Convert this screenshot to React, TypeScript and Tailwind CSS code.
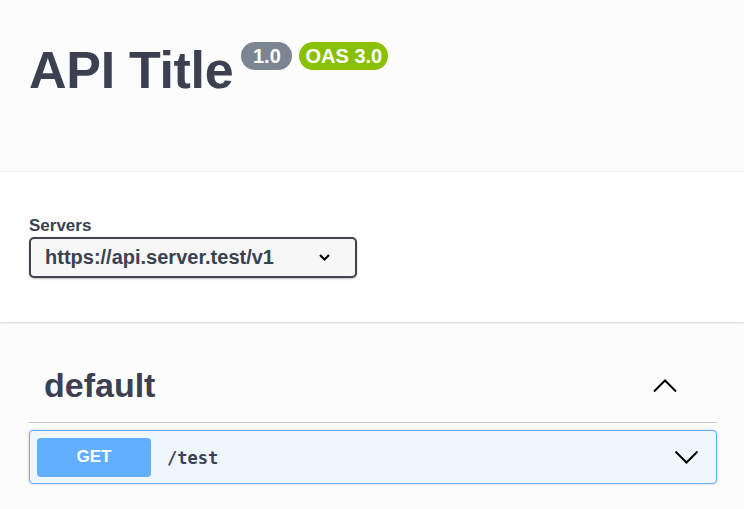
function Chevron({ up, className }: { up?: boolean; className: string }) {
  return (
    <svg viewBox="0 0 24 13" className={className} fill="none" stroke="currentColor" strokeWidth={2}>
      {up ? <polyline points="1,12.5 12,1.5 23,12.5" /> : <polyline points="1,0.5 12,11.5 23,0.5" />}
    </svg>
  );
}

export default function App() {
  return (
    <div className="min-h-screen bg-[#fcfcfc] text-[#3b4151] font-['Liberation_Sans',Arial,sans-serif]">
      {/* info */}
      <div className="h-[171px] px-[29px] pt-[42px]">
        <div className="flex items-start">
          <h1 className="mt-[2px] text-[52px] leading-[52px] font-bold tracking-[-0.3px]">API Title</h1>
          <span className="ml-[8px] w-[51px] h-[28px] rounded-full bg-[#7d8492] text-white text-[20px] leading-[28px] font-bold text-center">
            1.0
          </span>
          <span className="ml-[7px] w-[89px] h-[28px] rounded-full bg-[#89bf04] text-white text-[20px] leading-[28px] font-bold text-center">
            OAS 3.0
          </span>
        </div>
      </div>

      {/* servers */}
      <div className="bg-white border-t border-[#f3f3f3] px-[29px] pt-[44px] pb-[44px] shadow-[0_1px_2px_0_rgba(0,0,0,0.15)]">
        <label className="block text-[17px] leading-[20px] font-bold">Servers</label>
        <div className="mt-[1px] w-[328px] h-[41px] flex items-center justify-between pl-[14px] pr-[25px] border-2 border-[#41444e] rounded-[5px] bg-[#f7f7f7] shadow-[0_1px_2px_0_rgba(0,0,0,0.25)]">
          <span className="text-[20px] leading-[23px] font-bold">https://api.server.test/v1</span>
          <svg viewBox="0 0 11 7" className="w-[11px] h-[7px] text-black" fill="none" stroke="currentColor" strokeWidth={2}>
            <polyline points="1,1 5.5,5.5 10,1" />
          </svg>
        </div>
      </div>

      {/* tag */}
      <div className="pl-[29px] pr-[27px] pt-[46px]">
        <div className="flex items-center justify-between pl-[15px] pr-[40px] pb-[19px] border-b border-[#c5c6cb]">
          <h3 className="text-[34px] leading-[35px] font-bold">default</h3>
          <Chevron up className="w-[24px] h-[13px] text-black" />
        </div>
        <div className="mt-[7px] flex items-center h-[54px] pl-[7px] pr-[17px] border border-[#61affe] rounded-[4px] bg-[#eef6fe] shadow-[0_0_3px_rgba(0,0,0,0.19)]">
          <span className="w-[114px] h-[39px] flex items-center justify-center rounded-[4px] bg-[#61affe] text-white text-[17px] font-bold">
            GET
          </span>
          <span className="ml-[16px] mt-[3px] flex-1 text-[17px] font-semibold font-['DejaVu_Sans_Mono',monospace]">/test</span>
          <Chevron className="w-[25px] h-[13px] text-black" />
        </div>
      </div>
    </div>
  );
}
